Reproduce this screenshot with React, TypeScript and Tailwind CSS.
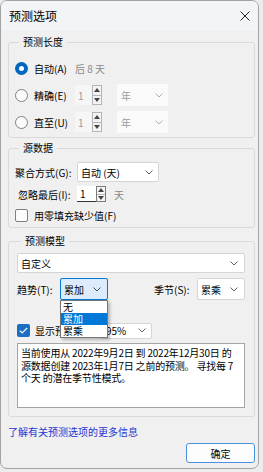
import React from "react";

const Chevron = ({ c = "#606060" }: { c?: string }) => (
  <svg width="8" height="5" viewBox="0 0 8 5">
    <polyline points="0.5,0.5 4,4 7.5,0.5" fill="none" stroke={c} strokeWidth="1" />
  </svg>
);

const Spin = ({ white = false }: { white?: boolean }) => (
  <div className={`flex flex-col w-[10px] h-full border ${white ? "border-[#7a7a7a] bg-[#f4f4f4]" : "border-[#b5b5b5] bg-[#f4f4f4]"}`}>
    <div className="flex-1 flex items-center justify-center border-b border-[#b5b5b5]">
      <svg width="6" height="4" viewBox="0 0 6 4"><polygon points="0,4 3,0 6,4" fill="#444" /></svg>
    </div>
    <div className="flex-1 flex items-center justify-center">
      <svg width="6" height="4" viewBox="0 0 6 4"><polygon points="0,0 3,4 6,0" fill="#444" /></svg>
    </div>
  </div>
);

const Radio = ({ on = false }: { on?: boolean }) =>
  on ? (
    <div className="w-[13px] h-[13px] rounded-full bg-[#0067c0] flex items-center justify-center shrink-0">
      <div className="w-[5px] h-[5px] rounded-full bg-white" />
    </div>
  ) : (
    <div className="w-[13px] h-[13px] rounded-full border border-[#808080] bg-[#fbfbfb] shrink-0" />
  );

export default function App() {
  return (
    <div className="min-h-screen bg-[#ececec] font-['Noto_Sans_CJK_SC',sans-serif] text-black">
      <div className="w-[259px] h-[469px] bg-[#f0f0f0] border border-[#a3a3a3] rounded-[7px] overflow-hidden flex flex-col text-[10px]">
        {/* Title bar */}
        <div className="h-[30px] shrink-0 flex items-center pl-[8px] pr-[8px] bg-[#f3f4f6]">
          <span className="text-[12px] leading-none">预测选项</span>
          <svg className="ml-auto" width="10" height="10" viewBox="0 0 10 10">
            <path d="M0.5 0.5 L9.5 9.5 M9.5 0.5 L0.5 9.5" stroke="#222" strokeWidth="1" />
          </svg>
        </div>

        {/* Group 1 */}
        <fieldset className="mt-[3px] ml-[7px] mr-[3px] border border-[#dadada] rounded-[3px] pl-[6px] pr-[8px] pt-[7px] pb-[4px]">
          <legend className="ml-[4px] px-[4px] text-[10px] leading-[16px]">预测长度</legend>
          <div className="flex flex-col gap-[5px]">
            <div className="h-[22px] flex items-center">
              <Radio on />
              <span className="ml-[6px] w-[41px]">自动(A)</span>
              <span className="text-[#8a8a8a]">后 8 天</span>
            </div>
            {["精确(E)", "直至(U)"].map((l) => (
              <div key={l} className="h-[22px] flex items-center">
                <Radio />
                <span className="ml-[6px] w-[41px]">{l}</span>
                <div className="flex h-[20px] items-stretch">
                  <div className="w-[17px] bg-[#f6f6f6] text-[#9a9a9a] pl-[3px] flex items-center">1</div>
                  <Spin />
                </div>
                <div className="ml-[15px] w-[51px] h-[22px] bg-[#fafafa] flex items-center justify-between pl-[4px] pr-[5px] text-[#9a9a9a]">
                  <span>年</span>
                  <Chevron c="#b0b0b0" />
                </div>
              </div>
            ))}
          </div>
        </fieldset>

        {/* Group 2 */}
        <fieldset className="mt-[2px] ml-[7px] mr-[3px] border border-[#dadada] rounded-[3px] pl-[6px] pr-[8px] pt-[6px] pb-[5px]">
          <legend className="ml-[4px] px-[4px] text-[10px] leading-[16px]">源数据</legend>
          <div className="h-[20px] flex items-center">
            <span className="w-[62px]">聚合方式(G):</span>
            <div className="w-[82px] h-[20px] bg-white border border-[#d5d5d5] rounded-[2px] flex items-center justify-between pl-[3px] pr-[5px]">
              <span>自动 (天)</span>
              <Chevron />
            </div>
          </div>
          <div className="mt-[4px] h-[16px] flex items-center">
            <span className="w-[62px] pl-[3px]">忽略最后(I):</span>
            <div className="flex h-[16px] items-stretch">
              <div className="w-[19px] bg-white border-b border-[#333] pl-[3px] flex items-center">1</div>
              <Spin white />
            </div>
            <span className="ml-[8px] text-[#8a8a8a]">天</span>
          </div>
          <div className="mt-[7px] h-[13px] flex items-center">
            <div className="w-[13px] h-[13px] rounded-[2px] border border-[#808080] bg-[#fbfbfb]" />
            <span className="ml-[6px]">用零填充缺少值(F)</span>
          </div>
        </fieldset>

        {/* Group 3 */}
        <fieldset className="mt-[5px] ml-[7px] mr-[3px] border border-[#dadada] rounded-[3px] pl-[8px] pr-[9px] pt-[4px] pb-[8px]">
          <legend className="ml-[4px] px-[4px] text-[10px] leading-[16px]">预测模型</legend>
          <div className="h-[20px] bg-white border border-[#d5d5d5] rounded-[2px] flex items-center justify-between pl-[3px] pr-[6px]">
            <span>自定义</span>
            <Chevron />
          </div>
          <div className="mt-[5px] h-[22px] flex items-center">
            <span className="w-[43px]">趋势(T):</span>
            <div className="relative w-[48px] h-[22px]">
              <div className="w-full h-full bg-[#dcecfc] border border-[#0078d7] rounded-[2px] flex items-center justify-between pl-[3px] pr-[6px]">
                <span>累加</span>
                <Chevron c="#505050" />
              </div>
              <div className="absolute left-0 top-[22px] w-[48px] bg-white border border-[#767676] shadow-[2px_2px_3px_rgba(0,0,0,0.25)] z-10 flex flex-col">
                <div className="h-[12px] leading-[12px] pl-[2px]">无</div>
                <div className="h-[12px] leading-[12px] pl-[2px] bg-[#0078d7] text-white">累加</div>
                <div className="h-[12px] leading-[12px] pl-[2px]">累乘</div>
              </div>
            </div>
            <span className="ml-auto w-[43px]">季节(S):</span>
            <div className="w-[48px] h-[22px] bg-white border border-[#d5d5d5] rounded-[2px] flex items-center justify-between pl-[3px] pr-[6px]">
              <span>累乘</span>
              <Chevron />
            </div>
          </div>
          <div className="mt-[22px] h-[17px] flex items-center">
            <div className="w-[13px] h-[13px] rounded-[2px] bg-[#1b6ec2] flex items-center justify-center shrink-0">
              <svg width="9" height="7" viewBox="0 0 9 7">
                <polyline points="0.8,3.6 3.2,6 8.2,0.8" fill="none" stroke="white" strokeWidth="1.2" />
              </svg>
            </div>
            <span className="ml-[5px] w-[66px] whitespace-nowrap overflow-hidden">显示预测区间</span>
            <div className="w-[51px] h-[16px] bg-white border border-[#d5d5d5] rounded-[2px] flex items-center justify-between pl-[4px] pr-[5px]">
              <span>95%</span>
              <Chevron />
            </div>
          </div>
          <div className="mt-[4px] h-[65px] bg-white border border-[#a5a5a5] pl-[3px] pt-[3px] text-[10px] leading-[12.5px] whitespace-nowrap tracking-[-0.2px]">
            当前使用从 2022年9月2日 到 2022年12月30日 的<br />
            源数据创建 2023年1月7日 之前的预测。 寻找每 7<br />
            个天 的潜在季节性模式。
          </div>
        </fieldset>

        <div className="mt-[8px] ml-[7px] leading-[14px] text-[#2536d4]">了解有关预测选项的更多信息</div>
        <div className="mt-[4px] flex">
          <div className="ml-auto mr-[3px] w-[69px] h-[20px] bg-[#fdfdfd] border border-[#4a90dc] rounded-[3px] flex items-center justify-center">
            确定
          </div>
        </div>
      </div>
    </div>
  );
}
